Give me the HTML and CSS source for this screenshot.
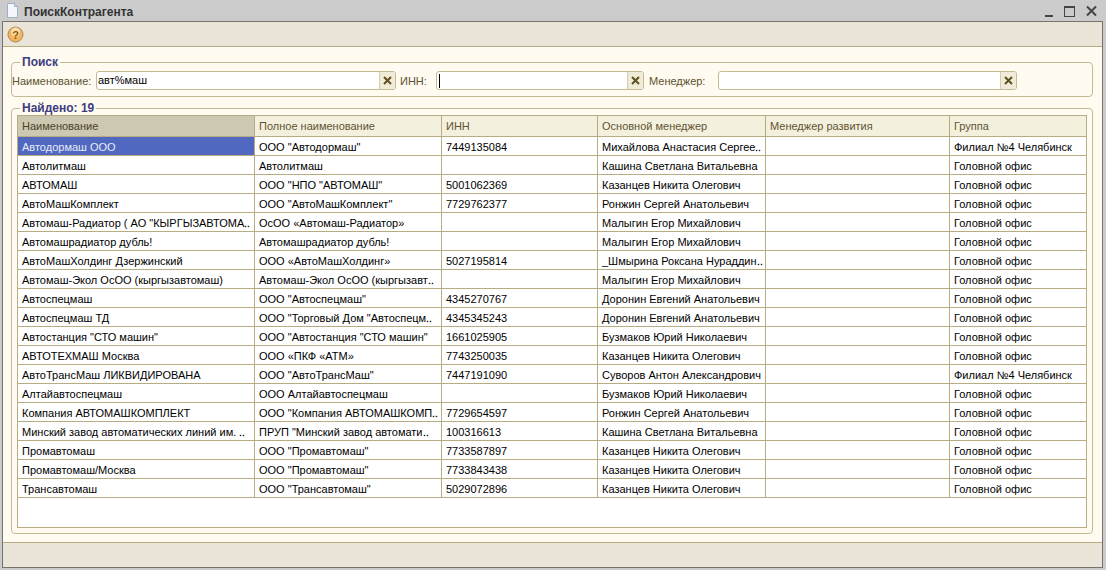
FILE: index.html
```html
<!DOCTYPE html>
<html lang="ru">
<head>
    <meta charset="UTF-8">
    <title>ПоискКонтрагента</title>
    <link rel="stylesheet" href="styles.css">
</head>
<body>
    <div class="titlebar">
        <svg class="doc-icon" width="13" height="15" viewBox="0 0 13 15"><path d="M1.5 .5H8.5L11.5 3.5V14.5H1.5Z" fill="#f4f8fc" stroke="#9fb0c4"/><path d="M8.5 .5V3.5H11.5" fill="#d5e0ec" stroke="#9fb0c4"/></svg>
        <span class="title">ПоискКонтрагента</span>
        <div class="win-buttons">
            <svg width="8" height="12" viewBox="0 0 8 12"><rect x="0" y="10" width="8" height="2" fill="#444"/></svg>
            <svg width="11" height="12" viewBox="0 0 11 12"><rect x=".5" y="1.5" width="10" height="10" fill="none" stroke="#444"/><rect x="0" y="1" width="11" height="2" fill="#444"/></svg>
            <svg width="11" height="12" viewBox="0 0 11 12"><path d="M1 1.5L10 10.5M10 1.5L1 10.5" stroke="#444" stroke-width="2"/></svg>
        </div>
    </div>

    <div class="window">
        <div class="toolbar">
            <svg class="help" width="17" height="17" viewBox="0 0 17 17">
                <circle cx="8.5" cy="8.5" r="7.5" fill="#f5b45c" stroke="#a9875a"/>
                <circle cx="8.5" cy="6" r="4.5" fill="#fbdca6"/>
                <text x="8.5" y="12.5" class="help-mark">?</text>
            </svg>
        </div>

        <div class="content">
            <div class="group search-group">
                <span class="legend">Поиск</span>
                <label class="field-label label-name">Наименование:</label>
                <div class="input input-name">
                    <span class="input-text">авт%маш</span>
                    <span class="clear"><svg width="9" height="9" viewBox="0 0 9 9"><path d="M1 1L8 8M8 1L1 8" stroke="#5f5020" stroke-width="2"/></svg></span>
                </div>
                <label class="field-label label-inn">ИНН:</label>
                <div class="input input-inn">
                    <span class="input-text"><span class="caret"></span></span>
                    <span class="clear"><svg width="9" height="9" viewBox="0 0 9 9"><path d="M1 1L8 8M8 1L1 8" stroke="#5f5020" stroke-width="2"/></svg></span>
                </div>
                <label class="field-label label-manager">Менеджер:</label>
                <div class="input input-manager">
                    <span class="input-text"></span>
                    <span class="clear"><svg width="9" height="9" viewBox="0 0 9 9"><path d="M1 1L8 8M8 1L1 8" stroke="#5f5020" stroke-width="2"/></svg></span>
                </div>
            </div>

            <div class="group result-group">
                <span class="legend">Найдено: 19</span>
                <div class="grid-box">
                    <table class="grid">
                        <colgroup>
                            <col class="col-name"><col class="col-full"><col class="col-inn"><col class="col-main"><col class="col-dev"><col class="col-group">
                        </colgroup>
                        <thead>
                            <tr><th class="sorted">Наименование</th><th>Полное наименование</th><th>ИНН</th><th>Основной менеджер</th><th>Менеджер развития</th><th>Группа</th></tr>
                        </thead>
                        <tbody>
                            <tr><td class="selected">Автодормаш ООО</td><td>ООО "Автодормаш"</td><td>7449135084</td><td>Михайлова Анастасия Сергее‥</td><td></td><td>Филиал №4 Челябинск</td></tr>
                            <tr><td>Автолитмаш</td><td>Автолитмаш</td><td></td><td>Кашина Светлана Витальевна</td><td></td><td>Головной офис</td></tr>
                            <tr><td>АВТОМАШ</td><td>ООО "НПО "АВТОМАШ"</td><td>5001062369</td><td>Казанцев Никита Олегович</td><td></td><td>Головной офис</td></tr>
                            <tr><td>АвтоМашКомплект</td><td>ООО "АвтоМашКомплект"</td><td>7729762377</td><td>Ронжин Сергей Анатольевич</td><td></td><td>Головной офис</td></tr>
                            <tr><td>Автомаш-Радиатор ( АО "КЫРГЫЗАВТОМА‥</td><td>ОсОО «Автомаш-Радиатор»</td><td></td><td>Малыгин Егор Михайлович</td><td></td><td>Головной офис</td></tr>
                            <tr><td>Автомашрадиатор дубль!</td><td>Автомашрадиатор дубль!</td><td></td><td>Малыгин Егор Михайлович</td><td></td><td>Головной офис</td></tr>
                            <tr><td>АвтоМашХолдинг Дзержинский</td><td>ООО «АвтоМашХолдинг»</td><td>5027195814</td><td>_Шмырина Роксана Нураддин‥</td><td></td><td>Головной офис</td></tr>
                            <tr><td>Автомаш-Экол ОсОО (кыргызавтомаш)</td><td>Автомаш-Экол ОсОО (кыргызавт‥</td><td></td><td>Малыгин Егор Михайлович</td><td></td><td>Головной офис</td></tr>
                            <tr><td>Автоспецмаш</td><td>ООО "Автоспецмаш"</td><td>4345270767</td><td>Доронин Евгений Анатольевич</td><td></td><td>Головной офис</td></tr>
                            <tr><td>Автоспецмаш ТД</td><td>ООО "Торговый Дом "Автоспецм‥</td><td>4345345243</td><td>Доронин Евгений Анатольевич</td><td></td><td>Головной офис</td></tr>
                            <tr><td>Автостанция "СТО машин"</td><td>ООО "Автостанция "СТО машин"</td><td>1661025905</td><td>Бузмаков Юрий Николаевич</td><td></td><td>Головной офис</td></tr>
                            <tr><td>АВТОТЕХМАШ Москва</td><td>ООО «ПКФ «АТМ»</td><td>7743250035</td><td>Казанцев Никита Олегович</td><td></td><td>Головной офис</td></tr>
                            <tr><td>АвтоТрансМаш ЛИКВИДИРОВАНА</td><td>ООО "АвтоТрансМаш"</td><td>7447191090</td><td>Суворов Антон Александрович</td><td></td><td>Филиал №4 Челябинск</td></tr>
                            <tr><td>Алтайавтоспецмаш</td><td>ООО Алтайавтоспецмаш</td><td></td><td>Бузмаков Юрий Николаевич</td><td></td><td>Головной офис</td></tr>
                            <tr><td>Компания АВТОМАШКОМПЛЕКТ</td><td>ООО "Компания АВТОМАШКОМП‥</td><td>7729654597</td><td>Ронжин Сергей Анатольевич</td><td></td><td>Головной офис</td></tr>
                            <tr><td>Минский завод автоматических линий им. ‥</td><td>ПРУП "Минский завод автомати‥</td><td>100316613</td><td>Кашина Светлана Витальевна</td><td></td><td>Головной офис</td></tr>
                            <tr><td>Промавтомаш</td><td>ООО "Промавтомаш"</td><td>7733587897</td><td>Казанцев Никита Олегович</td><td></td><td>Головной офис</td></tr>
                            <tr><td>Промавтомаш/Москва</td><td>ООО "Промавтомаш"</td><td>7733843438</td><td>Казанцев Никита Олегович</td><td></td><td>Головной офис</td></tr>
                            <tr><td>Трансавтомаш</td><td>ООО "Трансавтомаш"</td><td>5029072896</td><td>Казанцев Никита Олегович</td><td></td><td>Головной офис</td></tr>
                        </tbody>
                    </table>
                </div>
            </div>
        </div>

        <div class="footer"></div>
    </div>
</body>
</html>
```

FILE: styles.css
```css
html, body { margin: 0; height: 570px; overflow: hidden; }
body { background: #cbcbcb; font-family: "Liberation Sans", Arial, sans-serif; font-size: 11px; color: #000; }

.titlebar { height: 21px; display: flex; align-items: center; padding-left: 6px; padding-right: 9px; }
.doc-icon { margin-right: 5px; }
.title { font-weight: bold; font-size: 12px; color: #333; position: relative; top: 1px; }
.win-buttons { margin-left: auto; display: flex; gap: 11px; align-items: flex-start; }

.window { width: 1099px; height: 545px; margin-left: 2px; border: 1px solid #75736c; display: flex; flex-direction: column; background: #fffbf0; }

.toolbar { height: 24px; flex: none; background: #ebe5d9; border-bottom: 1px solid #b7ac82; display: flex; align-items: center; padding-left: 4px; }
.help-mark { font-size: 11px; font-weight: bold; text-anchor: middle; fill: #8a5a10; }

.content { flex: 1; padding: 15px 8px 0 8px; }
.footer { height: 24px; flex: none; background: #ebe5d9; border-top: 1px solid #b7ac82; }

.group { position: relative; border: 1px solid #c4ba94; border-radius: 4px; width: 1082px; box-sizing: border-box; }
.legend { position: absolute; left: 8px; top: -7px; padding: 0 2px; background: #fffbf0; color: #3d3d80; font-size: 12px; font-weight: bold; line-height: 13px; }

.search-group { height: 35px; margin-bottom: 11px; display: flex; align-items: center; padding-top: 1px; }
.field-label { color: #5c5230; white-space: nowrap; padding-top: 1px; }
.label-name { width: 84px; }
.label-inn { margin-left: 4px; width: 36px; }
.label-manager { margin-left: 5px; width: 69px; }

.input { height: 19px; box-sizing: border-box; border: 1px solid #c4ba94; border-radius: 3px; background: #fff; display: flex; }
.input-name { width: 300px; }
.input-inn { width: 208px; }
.input-manager { width: 299px; }
.input-text { flex: 1; line-height: 17px; padding: 1px 0 0 1px; color: #000; display: flex; align-items: center; }
.caret { width: 1px; height: 14px; margin-left: 1px; background: #000; }
.clear { width: 15px; background: #f1ecd9; border-left: 1px solid #d5cdaf; display: flex; align-items: center; justify-content: center; border-radius: 0 2px 2px 0; }

.result-group { height: 426px; padding: 6px 5px 5px 5px; }
.grid-box { height: 411px; border: 1px solid #b7ac82; background: #fff; }
.grid { border-collapse: separate; border-spacing: 0; table-layout: fixed; width: 1068px; }
.col-name { width: 237px; }
.col-full { width: 187px; }
.col-inn { width: 156px; }
.col-main { width: 168px; }
.col-dev { width: 184px; }
.col-group { width: 136px; }

.grid th, .grid td { box-sizing: border-box; padding: 0 0 0 4px; text-align: left; white-space: nowrap; overflow: hidden; border-right: 1px solid #b7ac82; border-bottom: 1px solid #b7ac82; }
.grid th:last-child, .grid td:last-child { border-right: none; }
.grid th { height: 21px; background: #f4f0de; color: #5f5432; font-weight: normal; }
.grid th.sorted { background: #cdc8b2; color: #4a4228; }
.grid td { height: 19px; padding-top: 1px; }
.grid td.selected { background: #5068c0; color: #e8ecf8; }
```
